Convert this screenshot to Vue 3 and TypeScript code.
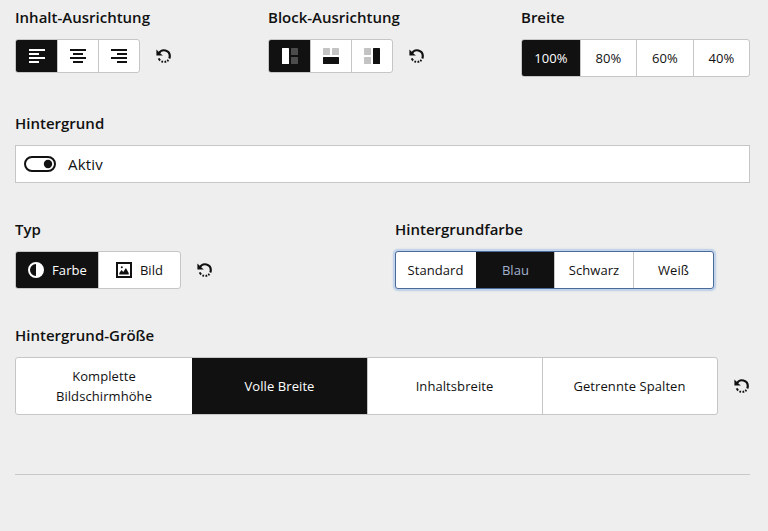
<script setup lang="ts">
import { defineComponent, h, ref } from 'vue'

const ResetIcon = defineComponent({
  setup: () => () =>
    h('svg', { width: 16, height: 16, viewBox: '0 0 16 16', fill: 'none', stroke: '#111', 'stroke-width': 2.2 }, [
      h('path', { d: 'M2.98 5.2A5.8 5.8 0 0 1 13.8 8.1A5.8 5.8 0 0 1 13.26 10.55' }),
      h('path', { d: 'M12.4 12A5.8 5.8 0 0 1 11.2 13M10.2 13.5A5.8 5.8 0 0 1 8.5 13.9M7.1 13.8A5.8 5.8 0 0 1 5.4 13.3M4.2 12.5A5.8 5.8 0 0 1 2.7 10.4', 'stroke-width': 2 }),
      h('path', { d: 'M.4 1.6V7.5H6.9L5 5.9 2.2 3.2Z', fill: '#111', stroke: 'none' }),
    ]),
})

const textBars = [
  { id: 'left', d: 'M0 1h16v2H0zM0 5h10v2H0zM0 9h16v2H0zM0 13h10v2H0z' },
  { id: 'center', d: 'M0 1h16v2H0zM3 5h10v2H3zM0 9h16v2H0zM3 13h10v2H3z' },
  { id: 'right', d: 'M0 1h16v2H0zM6 5h10v2H6zM0 9h16v2H0zM6 13h10v2H6z' },
]
const blocks = [
  { id: 'left', solid: [0, 0, 7, 16], faint: [[9, 0], [9, 9]] },
  { id: 'bottom', solid: [0, 9, 16, 7], faint: [[0, 0], [9, 0]] },
  { id: 'right', solid: [9, 0, 7, 16], faint: [[0, 0], [0, 9]] },
]
const widths = ['100%', '80%', '60%', '40%']
const colors = ['Standard', 'Blau', 'Schwarz', 'Weiß']
const sizes = ['Komplette Bildschirmhöhe', 'Volle Breite', 'Inhaltsbreite', 'Getrennte Spalten']

const align = ref('left')
const block = ref('left')
const width = ref('100%')
const active = ref(true)
const kind = ref('Farbe')
const color = ref('Blau')
const size = ref('Volle Breite')
</script>

<template>
  <main class="panel">
    <div class="row top">
      <section class="field">
        <h3>Inhalt-Ausrichtung</h3>
        <div class="line">
          <div class="group icons">
            <button v-for="b in textBars" :key="b.id" :class="{ on: align === b.id }" @click="align = b.id">
              <svg width="16" height="16" viewBox="0 0 16 16" fill="currentColor"><path :d="b.d" /></svg>
            </button>
          </div>
          <ResetIcon class="reset" />
        </div>
      </section>
      <section class="field">
        <h3>Block-Ausrichtung</h3>
        <div class="line">
          <div class="group icons">
            <button v-for="b in blocks" :key="b.id" :class="{ on: block === b.id }" @click="block = b.id">
              <svg width="16" height="16" viewBox="0 0 16 16" fill="currentColor">
                <rect :x="b.solid[0]" :y="b.solid[1]" :width="b.solid[2]" :height="b.solid[3]" rx=".5" />
                <rect v-for="(f, i) in b.faint" :key="i" :x="f[0]" :y="f[1]" width="7" height="7" rx=".5" opacity=".25" />
              </svg>
            </button>
          </div>
          <ResetIcon class="reset" />
        </div>
      </section>
      <section class="field">
        <h3>Breite</h3>
        <div class="group widths">
          <button v-for="w in widths" :key="w" :class="{ on: width === w }" @click="width = w">{{ w }}</button>
        </div>
      </section>
    </div>

    <section class="field">
      <h3>Hintergrund</h3>
      <div class="toggle" @click="active = !active">
        <svg width="32" height="16" viewBox="0 0 32 16">
          <rect x="1" y="1" width="30" height="14" rx="7" fill="none" stroke="#111" stroke-width="2" />
          <circle :cx="active ? 24 : 8" cy="8" r="4.2" fill="#111" />
        </svg>
        <span>Aktiv</span>
      </div>
    </section>

    <div class="row middle">
      <section class="field">
        <h3>Typ</h3>
        <div class="line">
          <div class="group kinds">
            <button :class="{ on: kind === 'Farbe' }" @click="kind = 'Farbe'">
              <svg width="16" height="16" viewBox="0 0 16 16">
                <circle cx="8" cy="8" r="7" fill="none" stroke="currentColor" stroke-width="2" />
                <path d="M8 1a7 7 0 0 1 0 14z" fill="currentColor" />
              </svg>
              Farbe
            </button>
            <button :class="{ on: kind === 'Bild' }" @click="kind = 'Bild'">
              <svg width="16" height="16" viewBox="0 0 16 16">
                <rect x="1" y="1" width="14" height="14" fill="none" stroke="currentColor" stroke-width="2" />
                <path d="M3.3 12.5V11L5.5 8l1.8 2 2.6-4 2.8 5v1.5z" fill="currentColor" />
                <circle cx="5.8" cy="5.2" r="1" fill="currentColor" />
              </svg>
              Bild
            </button>
          </div>
          <ResetIcon class="reset" />
        </div>
      </section>
      <section class="field">
        <h3>Hintergrundfarbe</h3>
        <div class="group colors">
          <button v-for="c in colors" :key="c" :class="{ on: color === c }" @click="color = c">{{ c }}</button>
        </div>
      </section>
    </div>

    <section class="field">
      <h3>Hintergrund-Größe</h3>
      <div class="line">
        <div class="group sizes">
          <button v-for="s in sizes" :key="s" :class="{ on: size === s }" @click="size = s">{{ s }}</button>
        </div>
        <ResetIcon class="reset" />
      </div>
    </section>
    <hr />
  </main>
</template>

<style>
body { background: #eee; }
</style>

<style scoped>
.panel {
  box-sizing: border-box;
  width: 768px;
  height: 531px;
  padding: 5px 18px 0 15px;
  overflow: hidden;
  background: #eee;
  color: #111;
  font-family: "Open Sans", "Noto Sans", sans-serif;
  display: flex;
  flex-direction: column;
}
.row { display: grid; }
.top { grid-template-columns: 253px 253px 229px; margin-bottom: 34px; }
.middle { grid-template-columns: 380px 1fr; margin: 34px 0; }
h3 { margin: 0 0 10px; font-size: 15px; line-height: 24px; font-weight: 600; }
.line { display: flex; align-items: center; gap: 16px; }
.reset { flex: none; }
.group {
  box-sizing: border-box;
  display: grid;
  height: 38px;
  background: #fff;
  border: 1px solid #c6c6c6;
  border-radius: 3px;
}
button {
  display: flex;
  align-items: center;
  justify-content: center;
  margin: 0;
  padding: 0;
  border: 0;
  border-left: 1px solid #c6c6c6;
  background: none;
  color: #111;
  font: 400 13px/20px "Open Sans", "Noto Sans", sans-serif;
  letter-spacing: 0.08px;
}
button:first-child { border-left-color: transparent; }
button.on { background: #111; color: #fff; border-left-color: #111; }
button.on:first-child { border-radius: 2px 0 0 2px; }
.icons { grid-template-columns: repeat(3, 41px); width: 125px; height: 34px; }
.widths { grid-template-columns: 58px 56px 57px 56px; }
.widths button:first-child { padding-right: 1px; }
.kinds { grid-template-columns: 82px 82px; width: 166px; }
.kinds button { gap: 8px; }
.widths .on, .kinds .on, .sizes .on { font-weight: 500; }
.colors {
  grid-template-columns: 80px 78px 79px 80px;
  width: 319px;
  border-color: #4a6a9c;
  box-shadow: 0 0 0 2px #c3d3e8, 0 0 2px 2px #c9d8ea;
}
.colors button:first-child { padding-right: 2px; }
.colors .on { color: #a3b1cf; }
.sizes { grid-template-columns: 176px 175px 175px 175px; width: 703px; height: 58px; }
.sizes button { padding: 0 31px 0 30px; }
.toggle {
  box-sizing: border-box;
  display: flex;
  align-items: center;
  gap: 12px;
  height: 38px;
  padding-left: 8px;
  background: #fff;
  border: 1px solid #c6c6c6;
  font-size: 15px;
  letter-spacing: 0.2px;
}
hr { width: 100%; height: 1px; margin: 59px 0 0; border: 0; background: #c8c8c8; }
</style>
